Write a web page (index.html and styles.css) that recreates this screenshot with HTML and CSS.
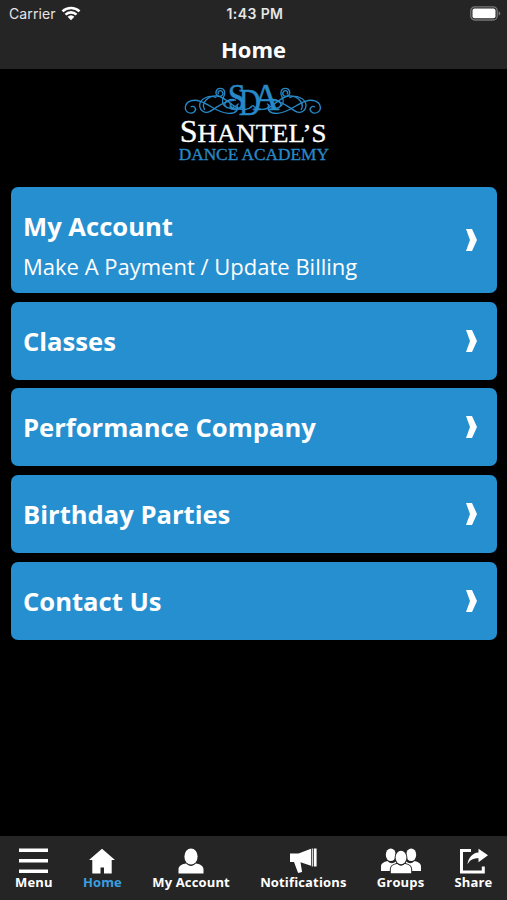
FILE: index.html
```html
<!DOCTYPE html>
<html lang="en">

<head>
    <meta charset="utf-8">
    <title>Shantel's Dance Academy</title>
    <link rel="stylesheet" href="styles.css">
</head>

<body>
    <header class="top">
        <div class="status">
            <div class="carrier">
                <span>Carrier</span>
                <svg class="wifi" width="20" height="15" viewBox="0 0 20 15">
                    <path d="M1.5 5.4a12.300 12.300 0 0 1 17 0M4.500 8.600a8 8 0 0 1 11 0" fill="none" stroke="#fff" stroke-width="2.600"/>
                    <path d="M6.600 10.800a5 5 0 0 1 6.800 0L10 14.200z" fill="#fff"/>
                </svg>
            </div>
            <span class="clock">1:43 PM</span>
            <svg class="battery" width="31" height="15" viewBox="0 0 31 15">
                <rect x=".8" y=".8" width="26.4" height="13.2" rx="4" fill="none" stroke="#77777a" stroke-width="1.3"/>
                <rect x="2.5" y="2.6" width="23" height="9.6" rx="2" fill="#fff"/>
                <path d="M28.6 5.2c2.3 1 2.3 3.4 0 4.4z" fill="#77777a"/>
            </svg>
        </div>
        <h1>Home</h1>
    </header>

    <main>
        <svg class="logo" width="170" height="95" viewBox="0 0 510 285">
            <!-- flourish, one half mirrored onto the other -->
            <defs>
                <g id="swirl">
                    <path d="M62 96c10-6 20 6 11 14-10 9-28 2-27-13 2-20 26-25 45-18 30 10 50 34 84 36 24 1 32-12 26-24"/>
                    <path d="M139 68c-20-10-50 3-50 23 0 17 17 26 31 18 22-12 42-33 72-33"/>
                    <path d="M104 105c-13-22 12-44 37-42 23 2 35 22 58 34 18 10 38 8 49-6"/>
                    <path d="M146 58c-6-6 3-15 10-9 8 9-3 19-13 13-9-6-6-22 8-22 13 0 17 14 10 25-7 12-4 25 8 30"/>
                    <path d="M198 76c-18-8-40 6-32 18 8 10 30 4 40-8"/>
                </g>
            </defs>
            <g class="swirls">
                <use href="#swirl"/>
                <use href="#swirl" transform="translate(497) scale(-1 1)"/>
            </g>
            <g class="initials">
                <text x="173" y="106" textLength="54" lengthAdjust="spacingAndGlyphs">S</text>
                <text x="206" y="120" textLength="66" lengthAdjust="spacingAndGlyphs">D</text>
                <text x="248" y="105" textLength="80" lengthAdjust="spacingAndGlyphs">A</text>
            </g>
            <text class="name" x="29" y="200" textLength="440" lengthAdjust="spacingAndGlyphs"><tspan class="cap">S</tspan>HANTEL’S</text>
            <text class="academy" x="26" y="254" textLength="451" lengthAdjust="spacingAndGlyphs">DANCE ACADEMY</text>
        </svg>

        <nav class="menu">
            <a class="card tall" href="#">
                <div>
                    <h2>My Account</h2>
                    <p>Make A Payment / Update Billing</p>
                </div>
                <svg class="arrow" width="11" height="22" viewBox="0 0 11 22"><path d="M0 0h6L11 11 6 22H0l4-11z"/></svg>
            </a>
            <a class="card" href="#">
                <h2>Classes</h2>
                <svg class="arrow" width="11" height="22" viewBox="0 0 11 22"><path d="M0 0h6L11 11 6 22H0l4-11z"/></svg>
            </a>
            <a class="card" href="#">
                <h2>Performance Company</h2>
                <svg class="arrow" width="11" height="22" viewBox="0 0 11 22"><path d="M0 0h6L11 11 6 22H0l4-11z"/></svg>
            </a>
            <a class="card" href="#">
                <h2>Birthday Parties</h2>
                <svg class="arrow" width="11" height="22" viewBox="0 0 11 22"><path d="M0 0h6L11 11 6 22H0l4-11z"/></svg>
            </a>
            <a class="card" href="#">
                <h2>Contact Us</h2>
                <svg class="arrow" width="11" height="22" viewBox="0 0 11 22"><path d="M0 0h6L11 11 6 22H0l4-11z"/></svg>
            </a>
        </nav>
    </main>

    <footer class="tabs">
        <a href="#">
            <svg width="29" height="26" viewBox="0 0 29 26"><path d="M0 .5h29v3.500H0zM0 11h29v3.500H0zM0 21.500h29v3.500H0z"/></svg>
            <span>Menu</span>
        </a>
        <a class="active" href="#">
            <svg width="26" height="26" viewBox="0 0 26 26"><path d="M13 .8L26 12h-3.300v13.500H15v-6h-3.500v6H3.300V12H0z"/></svg>
            <span>Home</span>
        </a>
        <a href="#">
            <svg width="26" height="26" viewBox="0 0 26 26"><ellipse cx="13" cy="8.500" rx="6.600" ry="8"/><path d="M.5 25.500v-4c0-4 4-5.500 7.700-6 3 3.300 6.600 3.300 9.600 0 3.700.5 7.700 2 7.700 6v4z"/></svg>
            <span>My Account</span>
        </a>
        <a href="#">
            <svg width="27" height="26" viewBox="0 0 27 26"><path d="M0 5.500h8.500L21 .8v17l-10.500-3.600 1.600 9.800-4 1-4.100-11H0zM21.800.5h1v18h-1zM23.800.5h2.800v18h-2.800z"/></svg>
            <span>Notifications</span>
        </a>
        <a href="#">
            <svg width="40" height="26" viewBox="0 0 40 26">
                <ellipse cx="9.800" cy="6.800" rx="5" ry="6.300"/>
                <ellipse cx="30.200" cy="6.800" rx="5" ry="6.300"/>
                <path d="M0 23v-4.500c0-3 2.500-4.500 6.500-5.500 3 3 6 2.500 8 .5l3 3V23zM40 23v-4.500c0-3-2.500-4.500-6.500-5.500-3 3-6 2.500-8 .5l-3 3V23z"/>
                <g stroke="#252525" stroke-width="2" paint-order="stroke">
                    <path d="M9.800 25.200v-3.800c0-3.500 2.700-4.600 6.500-5.600 2.500 2.500 4.900 2.500 7.400 0 3.800 1 6.500 2.100 6.500 5.600v3.800z"/>
                    <ellipse cx="20" cy="9.500" rx="5.400" ry="6.800"/>
                </g>
            </svg>
            <span>Groups</span>
        </a>
        <a href="#">
            <svg width="28" height="26" viewBox="0 0 28 26"><path d="M11 2.500H1.500v21.500h21.800v-5.500" fill="none" stroke="#fff" stroke-width="3"/><path d="M18.500.8L28 7.300l-9.500 7v-4c-5 0-8.300 1.500-11 5.900C8.500 9.500 12.500 5 18.500 4.500z"/></svg>
            <span>Share</span>
        </a>
    </footer>
</body>

</html>
```
FILE: styles.css
```css
* {
    box-sizing: border-box;
}

body {
    margin: 0;
    height: 900px;
    display: flex;
    flex-direction: column;
    background-color: #000;
    color: #fff;
    font-family: "Open Sans", sans-serif;
    overflow: hidden;
}

h1, h2, p {
    margin: 0;
}

a {
    color: inherit;
    text-decoration: none;
}

svg {
    display: block;
}

.top {
    height: 68.5px;
    background-color: #252525;
}

.status {
    display: grid;
    grid-template-columns: 1fr auto 1fr;
    align-items: center;
    height: 28px;
    padding: 0 6px 0 9px;
    font-family: Inter, sans-serif;
    font-size: 14px;
    line-height: 28px;
    color: #e6e6e6;
}

.carrier {
    display: flex;
    align-items: center;
    gap: 5px;
    letter-spacing: 0.1px;
}

.wifi {
    margin-bottom: 2px;
}

.clock {
    font-size: 14px;
    font-weight: 600;
    letter-spacing: 0.4px;
}

.battery {
    justify-self: end;
    margin-bottom: 2px;
}

h1 {
    font-size: 22px;
    line-height: 43px;
    text-align: center;
}

main {
    flex: 1;
}

.logo {
    margin: 6.5px 0 0 170px;
}

.swirls {
    fill: none;
    stroke: #2789c8;
    stroke-width: 4;
}

.initials {
    fill: #2789c8;
    stroke: #2789c8;
    stroke-width: 1.5;
    font-family: "Liberation Serif", serif;
    font-size: 116px;
}

.name {
    fill: #fff;
    font-family: "Liberation Serif", serif;
    font-size: 77px;
    stroke: #fff;
    stroke-width: 1;
}

.name .cap {
    font-size: 92px;
}

.academy {
    fill: #2789c8;
    stroke: #2789c8;
    stroke-width: 1;
    font-family: "Liberation Serif", serif;
    font-size: 50px;
}

.menu {
    display: flex;
    flex-direction: column;
    gap: 8.7px;
    padding: 17px 10.5px 0 11px;
}

.card {
    display: flex;
    align-items: center;
    justify-content: space-between;
    height: 78px;
    padding: 0 20px 0 12px;
    border-radius: 7px;
    background-color: #268fd0;
}

.card.tall {
    height: 106px;
}

.card.tall div {
    padding-top: 11px;
}

.card h2 {
    font-size: 25.6px;
    line-height: 40px;
}

.card > h2 {
    padding-top: 2px;
}

.card p {
    font-size: 22px;
    line-height: 38px;
}

.arrow {
    fill: #fff;
}

.tabs {
    display: flex;
    justify-content: space-between;
    height: 64px;
    padding: 12px 14.5px 0 15px;
    background-color: #252525;
    font-size: 13px;
    font-weight: 700;
    line-height: 17px;
    letter-spacing: 0.15px;
}

.tabs a {
    display: flex;
    flex-direction: column;
    align-items: center;
}

.tabs svg {
    fill: #fff;
}

.tabs .active span {
    color: #3a9fe0;
}
```
